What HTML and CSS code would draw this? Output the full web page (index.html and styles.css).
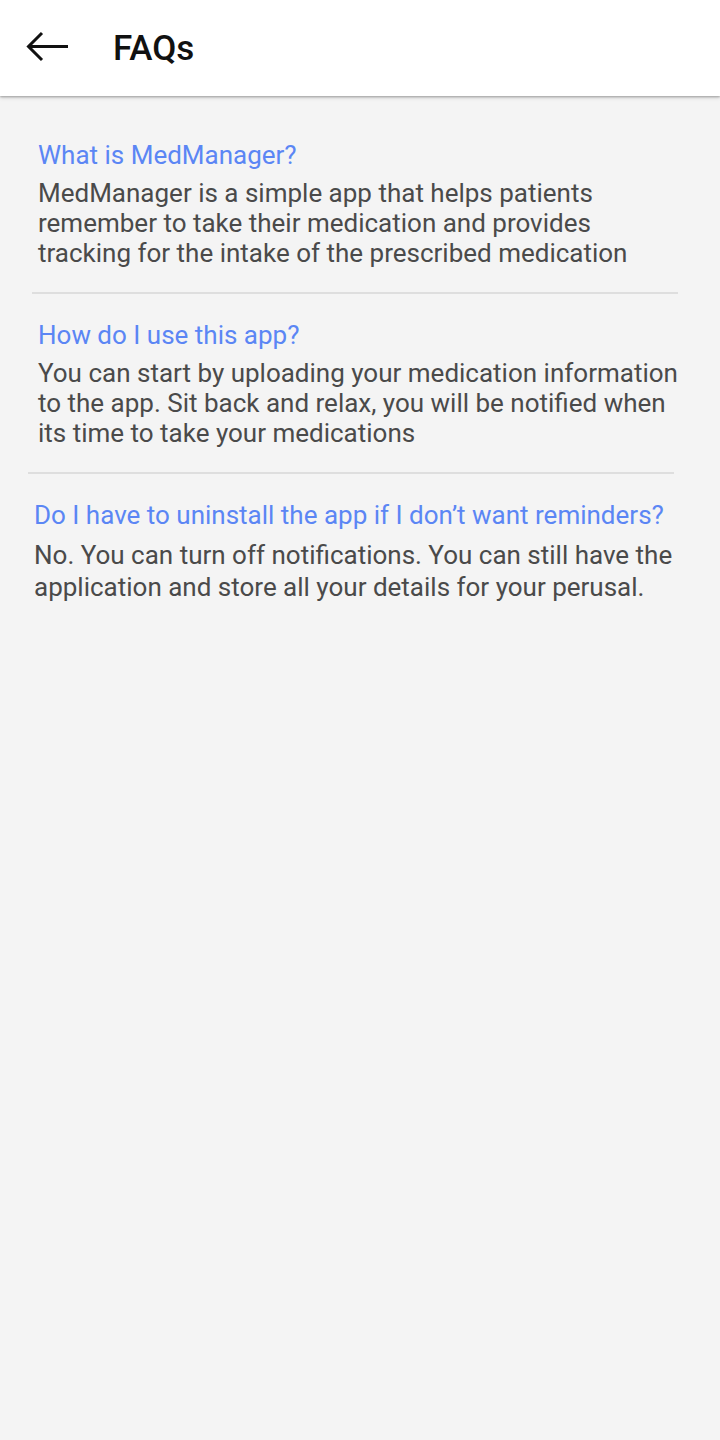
FILE: index.html
```html
<!DOCTYPE html>
<html>
<head>
<meta charset="utf-8">
<link rel="stylesheet" href="styles.css">
</head>
<body>
<header class="toolbar">
  <svg class="back" width="44" height="34" viewBox="0 0 44 34">
    <path d="M2 15.5H42M16 2L2.5 15.5L16 29" fill="none" stroke="#111" stroke-width="3"/>
  </svg>
  <h1 class="title">FAQs</h1>
</header>
<main class="faq-list">
  <section class="faq faq-1">
    <h2 class="q">What is MedManager?</h2>
    <p class="a">MedManager is a simple app that helps patients remember to take their medication and provides tracking for the intake of the prescribed medication</p>
  </section>
  <div class="divider divider-1"></div>
  <section class="faq faq-2">
    <h2 class="q">How do I use this app?</h2>
    <p class="a">You can start by uploading your medication information to the app. Sit back and relax, you will be notified when its time to take your medications</p>
  </section>
  <div class="divider divider-2"></div>
  <section class="faq faq-3">
    <h2 class="q">Do I have to uninstall the app if I don’t want reminders?</h2>
    <p class="a">No. You can turn off notifications. You can still have the application and store all your details for your perusal.</p>
  </section>
</main>
</body>
</html>
```
FILE: styles.css
```css
html, body {
  margin: 0;
  padding: 0;
  background: #f4f4f4;
  font-family: Roboto, "Noto Sans", sans-serif;
  width: 720px;
  min-height: 1440px;
}
.toolbar {
  height: 96px;
  background: #fff;
  display: flex;
  align-items: center;
  box-shadow: 0 1px 2px rgba(0,0,0,0.28), 0 2px 4px rgba(0,0,0,0.12);
  position: relative;
  z-index: 1;
}
.back {
  margin-left: 26px;
  flex: none;
}
.title {
  margin: 0 0 0 43px;
  font-size: 35px;
  font-weight: 500;
  color: #111;
}
.faq-list {
  padding-top: 44px;
}
.q {
  margin: 0;
  font-size: 26px;
  line-height: 30px;
  font-weight: 400;
  color: #5b86f4;
}
.a {
  margin: 8px 0 0;
  font-size: 26px;
  line-height: 30px;
  color: #4a4a4a;
}
.faq-1 {
  padding: 0 30px 24px 38px;
}
.faq-2 {
  padding: 26px 30px 24px 38px;
}
.faq-3 {
  padding: 26px 30px 0 34px;
}
.faq-3 .a {
  margin-top: 9px;
  line-height: 32px;
}
.divider {
  height: 2px;
  width: 646px;
  background: #dedede;
}
.divider-1 {
  margin-left: 32px;
}
.divider-2 {
  margin-left: 28px;
}
```
